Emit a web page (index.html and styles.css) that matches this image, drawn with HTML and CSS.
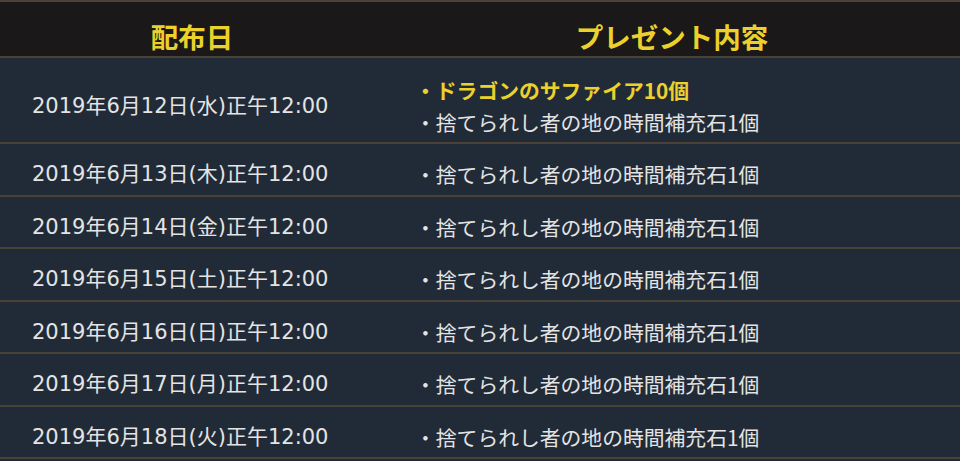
FILE: index.html
```html
<!DOCTYPE html>
<html lang="ja">
<head>
<meta charset="utf-8">
<link rel="stylesheet" href="styles.css">
</head>
<body>
<div class="table">
  <div class="head">
    <div class="col-date">配布日</div>
    <div class="col-item">プレゼント内容</div>
  </div>
  <div class="row first">
    <div class="col-date">2019年6月12日(水)正午12:00</div>
    <div class="col-item">
      <div class="hl">・ドラゴンのサファイア10個</div>
      <div>・捨てられし者の地の時間補充石1個</div>
    </div>
  </div>
  <div class="row">
    <div class="col-date">2019年6月13日(木)正午12:00</div>
    <div class="col-item">・捨てられし者の地の時間補充石1個</div>
  </div>
  <div class="row">
    <div class="col-date">2019年6月14日(金)正午12:00</div>
    <div class="col-item">・捨てられし者の地の時間補充石1個</div>
  </div>
  <div class="row">
    <div class="col-date">2019年6月15日(土)正午12:00</div>
    <div class="col-item">・捨てられし者の地の時間補充石1個</div>
  </div>
  <div class="row">
    <div class="col-date">2019年6月16日(日)正午12:00</div>
    <div class="col-item">・捨てられし者の地の時間補充石1個</div>
  </div>
  <div class="row">
    <div class="col-date">2019年6月17日(月)正午12:00</div>
    <div class="col-item">・捨てられし者の地の時間補充石1個</div>
  </div>
  <div class="row">
    <div class="col-date">2019年6月18日(火)正午12:00</div>
    <div class="col-item">・捨てられし者の地の時間補充石1個</div>
  </div>
</div>
</body>
</html>
```

FILE: styles.css
```css
html, body {
  margin: 0;
  padding: 0;
  background: #212b37;
}
body {
  font-family: "DejaVu Sans", "Noto Sans CJK JP", sans-serif;
  color: #e4e4e4;
  width: 960px;
  height: 461px;
  overflow: hidden;
}
.table {
  border-top: 2px solid #4a4237;
}
.head {
  display: grid;
  grid-template-columns: 40% 60%;
  background: #1a1818;
  border-bottom: 2px solid #4a4237;
  height: 56px;
  box-sizing: border-box;
  padding-top: 13px;
  line-height: 42px;
  font-family: "Noto Sans CJK JP", sans-serif;
  font-size: 27.5px;
  font-weight: 700;
  color: #ecd12c;
  text-align: center;
}
.row {
  display: grid;
  grid-template-columns: 40% 60%;
  align-items: center;
  border-bottom: 2px solid #4a4237;
  padding: 15px 0 5.5px;
  line-height: 30px;
  font-size: 21px;
}
.row.first {
  padding: 16px 0 4px;
  line-height: 32px;
}
.row .col-date {
  padding-left: 32px;
}
.row .col-item {
  padding-left: 31px;
  font-family: "Noto Sans CJK JP", sans-serif;
  font-size: 20.8px;
}
.hl {
  color: #ecd12c;
  font-weight: 700;
}
```
